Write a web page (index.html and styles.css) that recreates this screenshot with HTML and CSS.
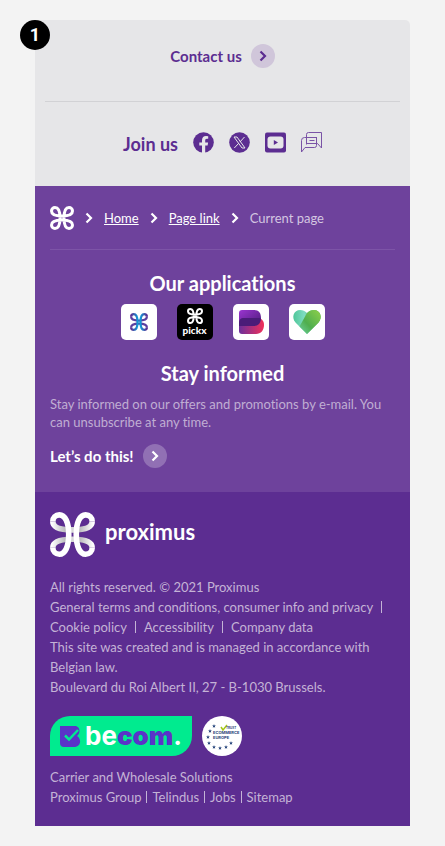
FILE: index.html
```html
<!DOCTYPE html>
<html lang="en">
<head>
  <meta charset="UTF-8">
  <meta name="viewport" content="width=device-width, initial-scale=1.0">
  <title>Footer - Proximus</title>
  <link rel="stylesheet" href="styles.css">
</head>
<body>
  <svg class="defs" aria-hidden="true">
    <symbol id="chevron" viewBox="0 0 8 12">
      <path d="M1.500 1.500 6 6 1.500 10.500" fill="none" stroke="currentColor" stroke-width="2.200"/>
    </symbol>
    <symbol id="knot" viewBox="0 0 48 48">
      <path d="M20 24C20 11 16 3 10 3 6 3 3 6 3 10c0 6 8 10 21 10s21-4 21-10c0-4-3-7-7-7-6 0-10 8-10 21s4 21 10 21c4 0 7-3 7-7 0-6-8-10-21-10S3 32 3 38c0 4 3 7 7 7 6 0 10-8 10-21z" fill="none" stroke="currentColor" stroke-width="6"/>
    </symbol>
    <symbol id="star" viewBox="0 0 10 10">
      <path d="m5 0 1.200 3.500H10L7 5.800 8.100 9.500 5 7.300 1.900 9.500 3 5.800 0 3.500h3.800z" fill="#1f3f77"/>
    </symbol>
  </svg>

  <footer class="footer">
    <span class="badge">1</span>

    <div class="contact">
      <a class="cta" href="#">Contact us
        <span class="cta-icon"><svg width="8" height="12"><use href="#chevron"/></svg></span>
      </a>
    </div>

    <div class="social">
      <h2>Join us</h2>
      <a href="#" aria-label="Facebook">
        <svg width="21" height="21" viewBox="0 0 21 21">
          <circle cx="10.500" cy="10.500" r="10.300" fill="#5c2d91"/>
          <path d="M9 21v-7.500H6.300v-3H9V8.200c0-2.700 1.600-4.200 4-4.200l2.200.2v2.600h-1.300c-1.300 0-1.700.8-1.700 1.600v2.100h2.900l-.5 3h-2.400V21z" fill="#e6e6e8"/>
        </svg>
      </a>
      <a href="#" aria-label="X">
        <svg width="21" height="21" viewBox="0 0 21 21">
          <circle cx="10.500" cy="10.500" r="10.300" fill="#5c2d91"/>
          <path d="M5 5h3l8 11h-3zM15.500 5l-4.600 5M9.800 11.200 5.300 16" fill="none" stroke="#e6e6e8"/>
        </svg>
      </a>
      <a href="#" aria-label="YouTube">
        <svg width="21" height="21" viewBox="0 0 21 21">
          <rect width="21" height="20" y=".5" rx="2" fill="#5c2d91"/>
          <rect x="2.500" y="4.500" width="16" height="12" rx="3" fill="#e6e6e8"/>
          <path d="M8.800 8v5l4.200-2.500z" fill="#5c2d91"/>
        </svg>
      </a>
      <a href="#" aria-label="Forum">
        <svg width="21" height="21" viewBox="0 0 21 21" fill="none" stroke="#7a53a6">
          <path d="M5.500 12.500V2.500a2 2 0 0 1 2-2h13v15.500l-4-4.500H5.500"/>
          <path d="M16 5.500H3.500a3 3 0 0 0-3 3V20l3.500-4.500h9.500a2 2 0 0 0 2-2v-8M8.500 8.500h5"/>
        </svg>
      </a>
    </div>

    <div class="main">
      <nav class="breadcrumb" aria-label="Breadcrumb">
        <a class="crumb-home" href="#" aria-label="Proximus"><svg width="24" height="24"><use href="#knot"/></svg></a>
        <svg class="sep" width="8" height="12"><use href="#chevron"/></svg>
        <a href="#">Home</a>
        <svg class="sep" width="8" height="12"><use href="#chevron"/></svg>
        <a href="#">Page link</a>
        <svg class="sep" width="8" height="12"><use href="#chevron"/></svg>
        <span>Current page</span>
      </nav>

      <h2>Our applications</h2>
      <div class="apps">
        <a href="#" aria-label="MyProximus">
          <svg width="18" height="18" viewBox="0 0 48 48" fill="none" stroke-width="6">
            <defs>
              <linearGradient id="blue" x2="1"><stop stop-color="#5c2d91"/><stop offset=".5" stop-color="#00b1e7"/><stop offset="1" stop-color="#5c2d91"/></linearGradient>
            </defs>
            <path d="M3 10c0 6 8 10 21 10s21-4 21-10M3 38c0-6 8-10 21-10s21 4 21 10" stroke="#5b3fa0"/>
            <path d="M3 10c0-4 3-7 7-7 6 0 10 8 10 21s-4 21-10 21c-4 0-7-3-7-7M45 10c0-4-3-7-7-7-6 0-10 8-10 21s4 21 10 21c4 0 7-3 7-7" stroke="url(#blue)"/>
          </svg>
        </a>
        <a class="pickx" href="#">
          <svg width="16" height="16"><use href="#knot"/></svg>
          <span>pickx</span>
        </a>
        <a href="#" aria-label="Banx">
          <svg width="36" height="36" viewBox="0 0 36 36">
            <defs>
              <linearGradient id="banx-top" x2="1" y2="1"><stop stop-color="#9a35d0"/><stop offset="1" stop-color="#4b1a78"/></linearGradient>
              <linearGradient id="banx-bottom" x2="1"><stop stop-color="#6b2f9b"/><stop offset="1" stop-color="#f0305a"/></linearGradient>
            </defs>
            <path d="M6 14h20c3 1 5 3 5 7 0 5-3 9-8 9H9a3 3 0 0 1-3-3z" fill="url(#banx-bottom)"/>
            <path d="M6 22V9a3 3 0 0 1 3-3h12c5 0 7 3 7 8H12c-3 0-6 3-6 8z" fill="url(#banx-top)"/>
            <path d="M6 22v-4c0-2 2-4 4-4h18c0 5-3 8-7 8z" fill="#4a1c78"/>
          </svg>
        </a>
        <a href="#" aria-label="Doktr">
          <svg width="36" height="36" viewBox="0 0 36 36">
            <defs>
              <linearGradient id="heart" x2="1"><stop stop-color="#4fc79a"/><stop offset=".4" stop-color="#7edcc0"/><stop offset="1" stop-color="#3f9f4c"/></linearGradient>
              <linearGradient id="heart-side" x1="1" x2="0" y2="1"><stop stop-color="#8fd04a"/><stop offset=".6" stop-color="#4fae4e"/><stop offset="1" stop-color="#6fd0a0"/></linearGradient>
            </defs>
            <path d="M18 30 6.500 18.500C2 13 5 6 11 6c3 0 5 1 7 3 2-2 4-3 7-3 6 0 9 7 4.500 12.500z" fill="url(#heart)"/>
            <path d="M10.500 22.500 18 9c2-2 4-3 7-3 6 0 9 7 4.500 12.500L18 30z" fill="url(#heart-side)"/>
          </svg>
        </a>
      </div>

      <h2>Stay informed</h2>
      <p>Stay informed on our offers and promotions by e-mail. You can unsubscribe at any time.</p>
      <a class="cta cta-light" href="#">Let’s do this!
        <span class="cta-icon"><svg width="8" height="12"><use href="#chevron"/></svg></span>
      </a>
    </div>

    <div class="legal">
      <a class="brand" href="#">
        <svg width="45" height="45" viewBox="0 0 48 48" fill="none" stroke-width="6">
          <defs>
            <linearGradient id="shade" gradientUnits="userSpaceOnUse" x1="2" x2="46"><stop stop-color="#fff"/><stop offset=".35" stop-color="#b5b5b8"/><stop offset=".5" stop-color="#d6d6d8"/><stop offset=".65" stop-color="#b5b5b8"/><stop offset="1" stop-color="#fff"/></linearGradient>
          </defs>
          <path d="M3 10c0 6 8 9 21 9s21-3 21-9M3 38c0-6 8-9 21-9s21 3 21 9" stroke="url(#shade)"/>
          <path d="M3 10c0-4 3-7 7-7 6 0 10 8 10 21s-4 21-10 21c-4 0-7-3-7-7M45 10c0-4-3-7-7-7-6 0-10 8-10 21s4 21 10 21c4 0 7-3 7-7" stroke="#fff"/>
        </svg>
        <span>proximus</span>
      </a>

      <p>All rights reserved. © 2021 Proximus</p>
      <ul class="links links-wide">
        <li><a href="#">General terms and conditions, consumer info and privacy</a></li>
        <li><a href="#">Cookie policy</a></li>
        <li><a href="#">Accessibility</a></li>
        <li><a href="#">Company data</a></li>
      </ul>
      <p>This site was created and is managed in accordance with Belgian law.</p>
      <p>Boulevard du Roi Albert II, 27 - B-1030 Brussels.</p>

      <div class="labels">
        <a class="becom" href="#">
          <svg width="21" height="21" viewBox="0 0 21 21">
            <path d="M0 0h15c5 0 6 7 2 10 5 3 4 11-3 11H4a4 4 0 0 1-4-4z" fill="#5a33c8"/>
            <path d="m5 9.500 4 4L18 4" fill="none" stroke="#00eb8f" stroke-width="2.500"/>
          </svg>
          <span>be<b>com</b>.</span>
        </a>
        <a class="trust" href="#" aria-label="Ecommerce Europe">
          <svg width="40" height="40" viewBox="0 0 40 40">
            <circle cx="20" cy="20" r="20" fill="#fff"/>
            <path d="m19 11 2 3 4-5" fill="none" stroke="#a5c715" stroke-width="1.500"/>
            <g fill="#1f3f77" font-family="Inter, sans-serif" font-weight="bold">
              <text x="24" y="13" font-size="3">TRUST</text>
              <text x="11" y="18" font-size="4">ECOMMERCE</text>
              <text x="11" y="23" font-size="4">EUROPE</text>
            </g>
            <use href="#star" x="10" y="8" width="4" height="4"/>
            <use href="#star" x="6" y="13" width="4" height="4"/>
            <use href="#star" x="4" y="19" width="4" height="4"/>
            <use href="#star" x="5" y="25" width="4" height="4"/>
            <use href="#star" x="10" y="29" width="4" height="4"/>
            <use href="#star" x="16" y="30" width="4" height="4"/>
            <use href="#star" x="22" y="29" width="4" height="4"/>
            <use href="#star" x="27" y="25" width="4" height="4"/>
          </svg>
        </a>
      </div>

      <p>Carrier and Wholesale Solutions</p>
      <ul class="links">
        <li><a href="#">Proximus Group</a></li>
        <li><a href="#">Telindus</a></li>
        <li><a href="#">Jobs</a></li>
        <li><a href="#">Sitemap</a></li>
      </ul>
    </div>
  </footer>
</body>
</html>
```
FILE: styles.css
```css
* { box-sizing: border-box; }

body {
  margin: 0;
  padding: 20px 35px;
  background: #f3f3f3;
  font-family: Lato, "Open Sans", sans-serif;
  font-size: 13px;
  line-height: 20px;
  font-variant-ligatures: none;
}

h2, p, ul { margin: 0; }
a { color: inherit; text-decoration: none; }
svg { display: block; }
.defs { position: absolute; width: 0; height: 0; }

.footer {
  position: relative;
  background: #e6e6e8;
  border-radius: 5px 5px 0 0;
  color: #5c2d91;
}

.badge {
  position: absolute;
  top: 0;
  left: -15px;
  width: 30px;
  height: 30px;
  border-radius: 50%;
  background: #000;
  color: #fff;
  font: bold 18px/30px Roboto, sans-serif;
  text-align: center;
}

.contact {
  display: flex;
  justify-content: center;
  margin: 0 10px;
  padding: 24px 0 33px;
  border-bottom: 1px solid #d2d2d5;
}

.cta {
  display: inline-flex;
  align-items: center;
  gap: 9px;
  font-size: 15px;
  font-weight: bold;
  line-height: 24px;
}

.cta-icon {
  display: flex;
  align-items: center;
  justify-content: center;
  width: 24px;
  height: 24px;
  border-radius: 50%;
  background: #d0c6da;
}

.social {
  display: flex;
  justify-content: center;
  gap: 15px;
  padding: 30px 0;
}

.social h2 { font-size: 18px; line-height: 24px; }

.main {
  padding: 20px 15px 24px;
  background: #6e429c;
  color: #fff;
}

.breadcrumb {
  display: flex;
  align-items: center;
  gap: 11px;
  padding-bottom: 19px;
  border-bottom: 1px solid #7d54a7;
}

.breadcrumb a { text-decoration: underline; }
.breadcrumb span { color: #d4c6e1; }

.main h2 {
  font-size: 20px;
  line-height: 24px;
  text-align: center;
}

.breadcrumb + h2 { margin-top: 21px; }

.apps {
  display: flex;
  justify-content: center;
  gap: 20px;
  margin: 9px 0 21px;
}

.apps a {
  display: flex;
  flex-direction: column;
  align-items: center;
  justify-content: center;
  width: 36px;
  height: 36px;
  border-radius: 5px;
  background: #fff;
}

.apps .pickx {
  background: #000;
  font-size: 10px;
  font-weight: 900;
  line-height: 12px;
}

.main p {
  margin: 10px 0 13px;
  color: #c0aed3;
  line-height: 18px;
}

.cta-light .cta-icon { background: #9170b4; }

.legal {
  padding: 20px 15px 19px;
  background: #5c2d91;
  color: #c4b3d6;
}

.brand {
  display: flex;
  align-items: center;
  gap: 10px;
  margin-bottom: 20px;
  color: #fff;
  font-size: 22px;
  font-weight: bold;
}

.brand span { padding-bottom: 6px; }

.links {
  display: flex;
  flex-wrap: wrap;
  padding: 0;
  list-style: none;
}

.links li { display: flex; align-items: center; }

.links li:not(:last-child)::after {
  content: "";
  width: 1px;
  height: 12px;
  margin: 0 5px;
  background: #c4b3d6;
}

.links-wide li:not(:last-child)::after { margin: 0 8px; }

.labels {
  display: flex;
  gap: 10px;
  margin: 19px 0 11px;
}

.becom {
  display: flex;
  align-items: center;
  gap: 4px;
  width: 142px;
  height: 40px;
  padding-left: 10px;
  border-radius: 20px 0;
  background: #00eb8f;
  color: #fff;
  font: bold 26px/30px Inter, sans-serif;
}

.becom b { color: #5a33c8; }
```
